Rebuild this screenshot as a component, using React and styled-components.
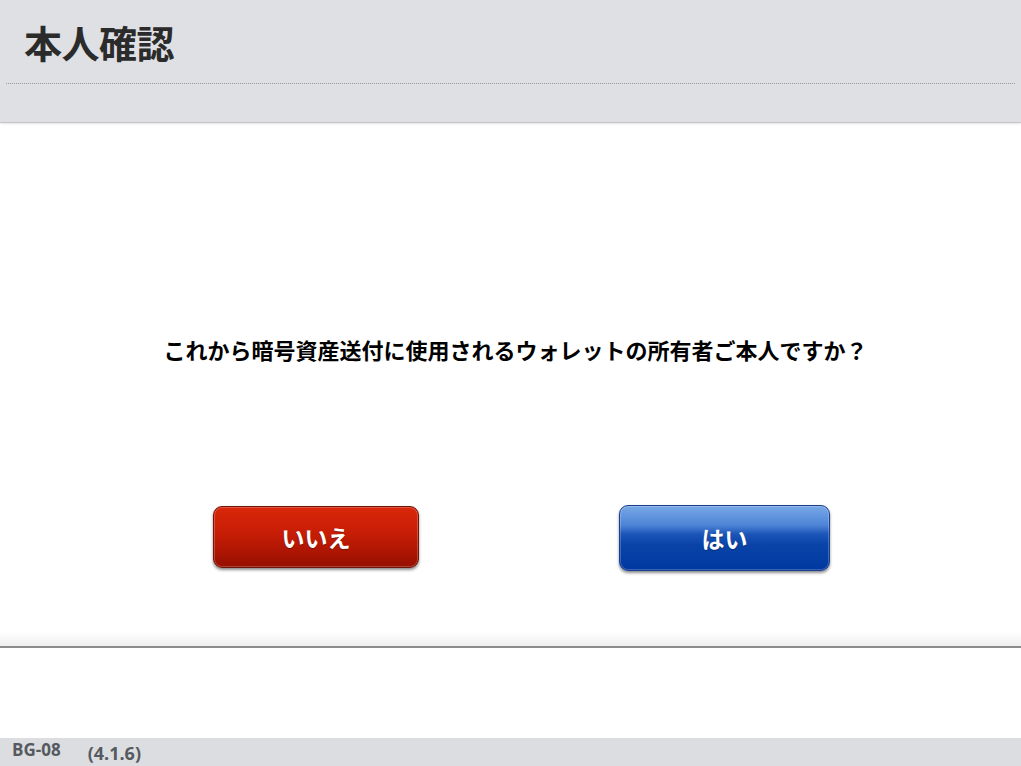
import React from 'react';
import styled, { createGlobalStyle } from 'styled-components';

const GlobalStyle = createGlobalStyle`
	html, body {
		margin: 0;
		padding: 0;
		background: #ffffff;
	}
	body {
		font-family: "Noto Sans CJK JP", "Noto Sans", sans-serif;
	}
`;

const Page = styled.div`
	width: 1021px;
	height: 766px;
	display: flex;
	flex-direction: column;
	overflow: hidden;
`;

const Header = styled.header`
	height: 122px;
	flex-shrink: 0;
	background: #dee0e4;
	box-shadow: 0 1px 1px rgba(0, 0, 0, 0.18), 0 2px 3px rgba(0, 0, 0, 0.08);
	position: relative;
	z-index: 1;
`;

const TitleRow = styled.div`
	height: 83px;
	margin: 0 6px;
	padding-left: 18px;
	display: flex;
	align-items: center;
	border-bottom: 1px dotted #9a9a9a;
`;

const Title = styled.h1`
	margin: 0;
	font-size: 38px;
	font-weight: 700;
	color: #2b2b2b;
	letter-spacing: -0.5px;
`;

const Main = styled.main`
	height: 524px;
	flex-shrink: 0;
	margin-top: 2px;
	display: flex;
	flex-direction: column;
	align-items: stretch;
	background: linear-gradient(to bottom, #ffffff 0, #ffffff 508px, #eeeeee 522px);
	border-bottom: 2px solid #8c8c8c;
	box-sizing: border-box;
`;

const Question = styled.p`
	margin: 210px 0 0;
	padding-left: 10px;
	text-align: center;
	font-size: 22px;
	line-height: 30px;
	font-weight: 700;
	color: #000;
`;

const ButtonRow = styled.div`
	margin-top: 141px;
	padding-left: 213px;
	display: flex;
	align-items: flex-start;
	gap: 200px;
`;

const Button = styled.button`
	width: ${p => (p.$variant === 'no' ? '206px' : '211px')};
	height: ${p => (p.$variant === 'no' ? '62px' : '66px')};
	margin-top: ${p => (p.$variant === 'no' ? '1px' : '0')};
	border-radius: 9px;
	border: 1px solid ${p => (p.$variant === 'no' ? '#6e1408' : '#1b3f8f')};
	background: ${p =>
		p.$variant === 'no'
			? 'linear-gradient(to bottom, #d9270a 0%, #c61d05 45%, #a81402 80%, #951000 100%)'
			: 'linear-gradient(to bottom, #78a8e6 0%, #4d84d6 30%, #1c55b8 44%, #0a44a8 60%, #0038a0 100%)'};
	box-shadow: inset 0 0 0 1px rgba(255, 255, 255, 0.22), 0 2px 3px rgba(0, 0, 0, 0.45);
	color: #ffffff;
	font-family: "Noto Sans CJK JP", sans-serif;
	font-size: 23px;
	font-weight: 700;
	text-shadow: 0 1px 1px rgba(0, 0, 0, 0.35);
	display: flex;
	align-items: center;
	justify-content: center;
	padding: 0;
	cursor: pointer;
`;

const Spacer = styled.div`
	flex: 1;
	background: #ffffff;
`;

const Footer = styled.footer`
	height: 28px;
	flex-shrink: 0;
	background: #dcdde1;
	display: flex;
	align-items: flex-start;
	padding-left: 12px;
	font-family: "Open Sans", "Noto Sans", sans-serif;
	font-weight: 700;
	color: #555a60;
`;

const Code = styled.span`
	font-size: 17px;
	line-height: 22px;
	margin-top: 1px;
`;

const Version = styled.span`
	font-size: 18px;
	line-height: 22px;
	margin-top: 4px;
	margin-left: 27px;
`;

const App = () => (
	<Page>
		<GlobalStyle />
		<Header>
			<TitleRow>
				<Title>本人確認</Title>
			</TitleRow>
		</Header>
		<Main>
			<Question>これから暗号資産送付に使用されるウォレットの所有者ご本人ですか？</Question>
			<ButtonRow>
				<Button $variant="no">いいえ</Button>
				<Button $variant="yes">はい</Button>
			</ButtonRow>
		</Main>
		<Spacer />
		<Footer>
			<Code>BG-08</Code>
			<Version>(4.1.6)</Version>
		</Footer>
	</Page>
);

export default App;
